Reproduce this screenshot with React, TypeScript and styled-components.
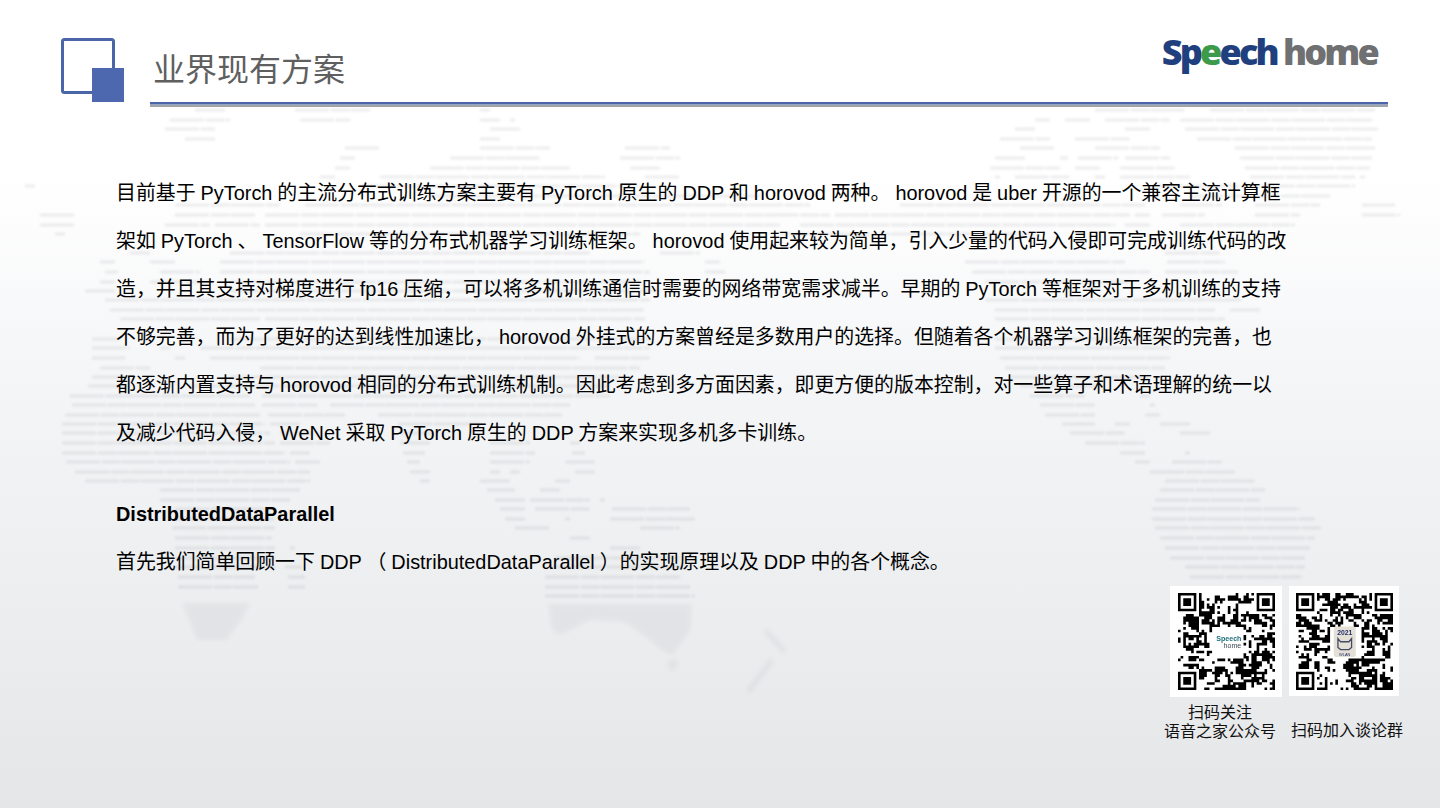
import React from 'react';
import styled, { createGlobalStyle } from 'styled-components';

const GlobalStyle = createGlobalStyle`
  html, body {
    margin: 0;
    padding: 0;
    background: #ffffff;
  }
`;

const Slide = styled.div`
  position: relative;
  width: 1440px;
  height: 808px;
  overflow: hidden;
  background: linear-gradient(180deg, #ffffff 0%, #ffffff 22%, #f4f5f7 48%, #eceef0 74%, #e5e6e8 100%);
  font-family: "Liberation Sans", "Noto Sans CJK SC", sans-serif;
  color: #000;
`;

const MapLayer = styled.svg`
  position: absolute;
  top: 0;
  left: 0;
  width: 1440px;
  height: 808px;
`;

const Content = styled.div`
  position: relative;
  display: flex;
  flex-direction: column;
`;

const Header = styled.header`
  display: flex;
  padding: 38px 52px 0 61px;
`;

const HeaderMain = styled.div`
  flex: 1;
  display: flex;
  flex-direction: column;
  margin-left: 25px;
`;

const HeaderRow = styled.div`
  height: 64px;
  display: flex;
  justify-content: space-between;
  align-items: flex-start;
`;

const Title = styled.h1`
  margin: 6px 0 0 3px;
  font-size: 32px;
  line-height: 46px;
  font-weight: 400;
  color: #5f5f5f;
  font-family: "Noto Sans CJK SC", sans-serif;
`;

const Logo = styled.div`
  margin: -9px 11px 0 0;
  font-family: "Open Sans", sans-serif;
  font-weight: 800;
  font-size: 36px;
  line-height: 46px;
  white-space: nowrap;
  display: flex;
`;

const LogoWord = styled.span<{ $tone: string; $gap?: number }>`
  color: ${p => p.$tone};
  letter-spacing: -2.8px;
  margin-left: ${p => p.$gap || 0}px;
`;

const LogoGreen = styled.span`
  color: #3d9a4b;
`;

const Rule = styled.div`
  height: 5px;
  background: linear-gradient(180deg, #4a66a8 0, #4a66a8 2.4px, #dfe0e4 2.6px, #a3a4a6 3.2px, #a3a4a6 100%);
`;

const Body = styled.main`
  padding: 62px 0 0 116px;
`;

const Line = styled.p`
  margin: 0;
  height: 48px;
  font-size: 19.9px;
  word-spacing: -0.55px;
  line-height: 48px;
  white-space: pre;
`;

const Heading = styled(Line)`
  margin-top: 33px;
  font-weight: 700;
`;

const Footer = styled.footer`
  display: flex;
  justify-content: flex-end;
  gap: 15px;
  padding-right: 37px;
`;

const QrBlock = styled.div`
  width: 112px;
  display: flex;
  flex-direction: column;
  align-items: center;
`;

const QrCard = styled.div<{ $wide?: boolean }>`
  width: ${p => (p.$wide ? 112 : 110)}px;
  height: ${p => (p.$wide ? 111 : 110)}px;
  margin-left: ${p => (p.$wide ? 12 : 0)}px;
  margin-right: ${p => (p.$wide ? 0 : 6)}px;
  background: #ffffff;
  display: flex;
  align-items: center;
  justify-content: center;
`;

const QrSvg = styled.svg`
  width: 97px;
  height: 97px;
  filter: blur(0.35px);
`;

const Caption = styled.div<{ $lines: number }>`
  margin-top: ${p => (p.$lines === 2 ? 6 : 25)}px;
  font-size: 16px;
  line-height: 19px;
  color: #111;
  text-align: center;
  white-space: pre;
`;

const LINES = [
  '目前基于 PyTorch 的主流分布式训练方案主要有 PyTorch 原生的 DDP 和 horovod 两种。 horovod 是 uber 开源的一个兼容主流计算框',
  '架如 PyTorch 、 TensorFlow 等的分布式机器学习训练框架。 horovod 使用起来较为简单，引入少量的代码入侵即可完成训练代码的改',
  '造，并且其支持对梯度进行 fp16 压缩，可以将多机训练通信时需要的网络带宽需求减半。早期的 PyTorch 等框架对于多机训练的支持',
  '不够完善，而为了更好的达到线性加速比， horovod 外挂式的方案曾经是多数用户的选择。但随着各个机器学习训练框架的完善，也',
  '都逐渐内置支持与 horovod 相同的分布式训练机制。因此考虑到多方面因素，即更方便的版本控制，对一些算子和术语理解的统一以',
  '及减少代码入侵， WeNet 采取 PyTorch 原生的 DDP 方案来实现多机多卡训练。',
];

// y, then pairs of x start / x end, read off the faint dotted world map
const MAP_ROWS: number[][] = [
  [110, 195, 225, 295, 370, 480, 490, 1095, 1185, 1210, 1375],
  [120, 170, 230, 300, 350, 480, 500, 510, 515, 1035, 1050, 1065, 1090, 1105, 1170, 1180, 1372],
  [129, 165, 215, 490, 520, 1015, 1035, 1125, 1150, 1185, 1378],
  [139, 185, 215, 480, 500, 1000, 1050, 1075, 1130, 1197, 1372],
  [148, 345, 380, 480, 550, 625, 670, 1020, 1055, 1095, 1160, 1235, 1375],
  [158, 340, 355, 450, 540, 620, 680, 995, 1025, 1060, 1068, 1078, 1118, 1125, 1170, 1240, 1372],
  [168, 335, 350, 430, 570, 630, 660, 990, 1060, 1075, 1100, 1120, 1175, 1245, 1370],
  [177, 320, 335, 380, 605, 645, 680, 995, 1000, 1015, 1070, 1095, 1105, 1120, 1190, 1250, 1355, 1360, 1365],
  [186, 25, 35, 360, 640, 1150, 1355],
  [196, 430, 760, 1190, 1330],
  [205, 175, 280, 305, 810, 900, 1145, 1180, 1222, 1255, 1320, 1362, 1395],
  [215, 40, 75, 175, 255, 265, 830, 835, 1130, 1135, 1150, 1162, 1205, 1255, 1300, 1362, 1400],
  [225, 40, 75, 165, 210, 215, 260, 265, 780, 800, 1115, 1125, 1150, 1180, 1295],
  [234, 55, 65, 300, 640, 780, 1040],
  [253, 130, 150, 230, 590, 660, 700, 1165, 1220],
  [262, 100, 115, 150, 175, 220, 645, 705, 720, 965, 1125, 1167, 1225],
  [272, 105, 118, 160, 200, 220, 650, 705, 725, 972, 1150, 1165, 1238],
  [282, 100, 115, 150, 210, 230, 640, 985, 1130],
  [291, 85, 115, 230, 660],
  [300, 105, 650, 985, 1243],
  [310, 110, 645, 995, 1215, 1230, 1260],
  [319, 120, 260, 265, 645, 995, 1225],
  [339, 92, 120, 230, 650, 995, 1170],
  [348, 92, 130, 160, 170, 200, 650, 995, 1170],
  [358, 92, 125, 175, 185, 210, 580, 595, 650, 1000, 1170],
  [368, 100, 150, 260, 640, 1005, 1165],
  [377, 92, 125, 230, 620, 1010, 1150],
  [386, 88, 130, 190, 610, 1020, 1100],
  [396, 70, 250, 262, 610, 1030, 1085, 1140, 1150],
  [405, 72, 255, 262, 318, 330, 570, 1040, 1095, 1150, 1155],
  [415, 65, 260, 268, 345, 378, 562, 1045, 1095, 1145, 1160],
  [424, 62, 265, 270, 300, 398, 480, 1062, 1095, 1115, 1130, 1160, 1190],
  [433, 62, 270, 280, 320, 400, 430, 1070, 1125, 1180, 1210],
  [443, 62, 275, 280, 330, 400, 430, 490, 530, 570, 580, 1085, 1145],
  [453, 62, 285, 290, 310, 403, 425, 490, 535, 572, 585, 1120, 1145, 1185, 1190],
  [462, 66, 290, 295, 320, 407, 420, 490, 530, 565, 595, 1135, 1150, 1172, 1222],
  [472, 75, 310, 410, 430, 490, 500, 510, 520, 575, 595, 1150, 1235],
  [481, 85, 310, 420, 430, 480, 510, 555, 570, 1165, 1255],
  [490, 160, 300, 487, 515, 540, 560, 1160, 1265],
  [500, 160, 290, 495, 525, 530, 590, 600, 605, 1155, 1260],
  [509, 175, 270, 500, 525, 535, 590, 612, 690, 1152, 1300],
  [519, 175, 275, 505, 525, 565, 570, 610, 695, 1152, 1315],
  [528, 172, 275, 515, 550, 640, 680, 1155, 1322],
  [538, 175, 272, 570, 590, 1160, 1315],
  [548, 175, 275, 290, 295, 610, 640, 1165, 1310],
  [558, 175, 275, 555, 680, 1170, 1305],
  [567, 175, 275, 285, 302, 550, 685, 1185, 1305],
  [577, 178, 255, 288, 305, 545, 680, 1190, 1302],
  [587, 178, 258, 288, 305, 545, 690],
  [596, 545, 695],
];

const mapPath = MAP_ROWS.map(([y, ...xs]) => {
  let d = '';
  for (let i = 0; i < xs.length; i += 2) d += `M${xs[i]} ${y}H${xs[i + 1]}`;
  return d;
}).join('');

// QR modules: the real codes can't be read back from the picture, so fill them from a seed
const QR_SIZE = 37;

function qrPath(seed: number, hole: number) {
  let s = seed;
  const next = () => {
    s = (s * 1664525 + 1013904223) >>> 0;
    return (s >>> 16) / 65536;
  };
  const inFinder = (x: number, y: number) =>
    (x < 8 && y < 8) || (x >= QR_SIZE - 8 && y < 8) || (x < 8 && y >= QR_SIZE - 8);
  const c = QR_SIZE / 2;
  const above: boolean[] = [];
  let d = '';
  for (let y = 0; y < QR_SIZE; y++) {
    let prev = false;
    for (let x = 0; x < QR_SIZE; x++) {
      const dark = next() < 0.24 + (prev ? 0.25 : 0) + (above[x] ? 0.25 : 0);
      prev = dark;
      above[x] = dark;
      if (!dark || inFinder(x, y)) continue;
      if (Math.abs(x - c) < hole && Math.abs(y - c) < hole) continue;
      d += `M${x} ${y}h1v1h-1z`;
    }
  }
  [[0, 0], [QR_SIZE - 7, 0], [0, QR_SIZE - 7]].forEach(([x, y]) => {
    d += `M${x} ${y}h7v7h-7zM${x + 1} ${y + 1}v5h5v-5zM${x + 2} ${y + 2}h3v3h-3z`;
  });
  return d;
}

const BoxIcon = () => (
  <svg width="64" height="64" viewBox="0 0 64 64">
    <rect x="1.5" y="1.5" width="51" height="53" rx="2" fill="none" stroke="#4a66a8" strokeWidth="3" />
    <rect x="31" y="30" width="32" height="34" fill="#4d68ae" />
  </svg>
);

const WorldMap = () => (
  <MapLayer viewBox="0 0 1440 808">
    <defs>
      <filter id="soft">
        <feGaussianBlur stdDeviation="1" />
      </filter>
      <filter id="softer">
        <feGaussianBlur stdDeviation="2" />
      </filter>
    </defs>
    <g filter="url(#soft)" opacity="0.11">
      <path d={mapPath} stroke="#5f636c" strokeWidth="3" fill="none" strokeDasharray="34 1.5 19 1" />
    </g>
    <g filter="url(#softer)" opacity="0.05">
      <path d="M182 603H250L243 618L226 640H197L190 622Z" fill="#3f434c" />
      <path d="M548 604H692L690 630L680 645L672 655L662 650L650 640L625 622L590 620L560 635L552 630Z" fill="#3f434c" />
      <path d="M668 660h10l-3 10h-6z" fill="#3f434c" />
      <path d="M765 630L785 652M772 660L748 692" stroke="#3f434c" strokeWidth="6" fill="none" />
    </g>
  </MapLayer>
);

const SpeechQr = () => (
  <QrSvg viewBox="0 0 37 37">
    <path d={qrPath(7, 5.6)} fill="#000" fillRule="evenodd" />
    <rect x="13.4" y="13.4" width="10.2" height="10.2" rx="1.4" fill="#fff" />
    <text x="14.6" y="18.4" fontSize="2.7" fontWeight="700" fill="#1f6f78" fontFamily="Liberation Sans">Speech</text>
    <text x="17.4" y="21" fontSize="2.7" fill="#3b4a50" fontFamily="Liberation Sans">home</text>
  </QrSvg>
);

const EventQr = () => (
  <QrSvg viewBox="0 0 37 37">
    <path d={qrPath(23, 5.6)} fill="#000" fillRule="evenodd" />
    <rect x="14.4" y="12.8" width="8.4" height="11.6" rx="0.8" fill="#e4e0d6" />
    <text x="18.6" y="15.9" fontSize="2.6" fontWeight="700" fill="#27306e" textAnchor="middle" fontFamily="Liberation Sans">2021</text>
    <path d="M16 17.4l1 1.2h3.2l1-1.2v3.4l-1 .8h-3.2l-1-.8z" fill="none" stroke="#444a66" strokeWidth="0.5" />
    <text x="18.6" y="24" fontSize="1.5" fill="#27306e" textAnchor="middle" fontFamily="Liberation Sans">WLAN</text>
  </QrSvg>
);

export default function App() {
  return (
    <>
      <GlobalStyle />
      <Slide>
        <WorldMap />
        <Content>
          <Header>
            <BoxIcon />
            <HeaderMain>
              <HeaderRow>
                <Title>业界现有方案</Title>
                <Logo>
                  <LogoWord $tone="#1f3f7e">Sp<LogoGreen>e</LogoGreen>ech</LogoWord>
                  <LogoWord $tone="#6f7072" $gap={6}>home</LogoWord>
                </Logo>
              </HeaderRow>
              <Rule />
            </HeaderMain>
          </Header>
          <Body>
            {LINES.map(text => (
              <Line key={text}>{text}</Line>
            ))}
            <Heading>DistributedDataParallel</Heading>
            <Line>首先我们简单回顾一下 DDP （ DistributedDataParallel ）的实现原理以及 DDP 中的各个概念。</Line>
          </Body>
          <Footer>
            <QrBlock>
              <QrCard $wide>
                <SpeechQr />
              </QrCard>
              <Caption $lines={2}>{'扫码关注\n语音之家公众号'}</Caption>
            </QrBlock>
            <QrBlock>
              <QrCard>
                <EventQr />
              </QrCard>
              <Caption $lines={1}>扫码加入谈论群</Caption>
            </QrBlock>
          </Footer>
        </Content>
      </Slide>
    </>
  );
}
